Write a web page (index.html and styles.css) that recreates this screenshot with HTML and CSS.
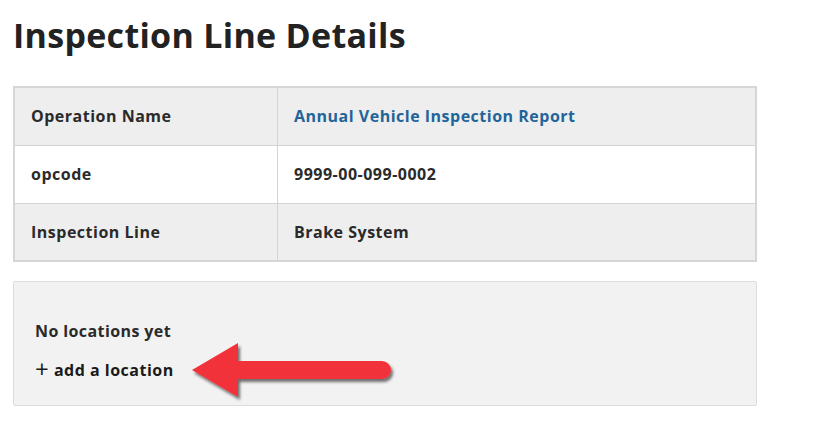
FILE: index.html
```html
<!DOCTYPE html>
<html lang="en">
<head>
    <meta charset="UTF-8">
    <meta name="viewport" content="width=device-width, initial-scale=1.0">
    <title>Inspection Line Details</title>
    <link rel="stylesheet" href="styles.css">
</head>
<body>
    <div class="page">
        <h1>Inspection Line Details</h1>

        <table class="details">
            <tr>
                <th>Operation Name</th>
                <td><a href="#">Annual Vehicle Inspection Report</a></td>
            </tr>
            <tr>
                <th>opcode</th>
                <td>9999-00-099-0002</td>
            </tr>
            <tr>
                <th>Inspection Line</th>
                <td>Brake System</td>
            </tr>
        </table>

        <div class="locations">
            <p class="empty">No locations yet</p>
            <a class="add-link" href="#"><span class="plus">+</span> add a location</a>

            <!-- annotation arrow -->
            <svg class="callout" width="240" height="70" viewBox="0 0 240 70">
                <defs>
                    <filter id="shadow" x="-10%" y="-20%" width="130%" height="150%">
                        <feDropShadow dx="2" dy="3" stdDeviation="1.6" flood-color="#000" flood-opacity="0.55"/>
                    </filter>
                </defs>
                <path filter="url(#shadow)" fill="#f2323a"
                      d="M4 30 L50 3 L50 21 L194 21 A9 9 0 0 1 194 39 L50 39 L50 57 Z"/>
            </svg>
        </div>
    </div>
</body>
</html>
```

FILE: styles.css
```css
body {
    font-family: 'Open Sans', sans-serif;
    color: #262626;
    background: #fff;
    margin: 0;
    padding: 0;
}

.page {
    width: 744px;
    padding: 13px 0 0 13px;
}

h1 {
    font-size: 34px;
    font-weight: 700;
    letter-spacing: 0.3px;
    color: #222;
    margin: 0 0 29px 0;
    line-height: 44px;
}

.details {
    width: 744px;
    border-collapse: collapse;
    border: 2px solid #d6d6d6;
}

.details tr {
    height: 58px;
    background: #eeeeee;
}

.details tr:nth-child(2) {
    background: #fff;
}

.details th, .details td {
    border: 1px solid #d3d3d3;
    font-size: 16px;
    font-weight: 700;
    letter-spacing: 0.5px;
    text-align: left;
    padding: 0 0 0 16px;
    color: #2a2a2a;
}

.details th {
    width: 246px;
}

.details a {
    color: #1f6599;
    text-decoration: none;
}

.locations {
    position: relative;
    margin-top: 19px;
    height: 123px;
    background: #f2f2f2;
    border: 1px solid #dcdcdc;
    border-radius: 2px;
    padding: 0 0 0 21px;
}

.empty {
    margin: 39px 0 0 0;
    font-size: 16px;
    font-weight: 700;
    letter-spacing: 0.4px;
    line-height: 20px;
    color: #2a2a2a;
}

.add-link {
    display: inline-block;
    margin-top: 18px;
    font-size: 16px;
    font-weight: 700;
    letter-spacing: 0.5px;
    line-height: 20px;
    color: #1a1a1a;
    text-decoration: none;
}

.plus {
    font-weight: 400;
    font-size: 24px;
    vertical-align: -2px;
}

.callout {
    position: absolute;
    left: 174px;
    top: 58px;
}
```
